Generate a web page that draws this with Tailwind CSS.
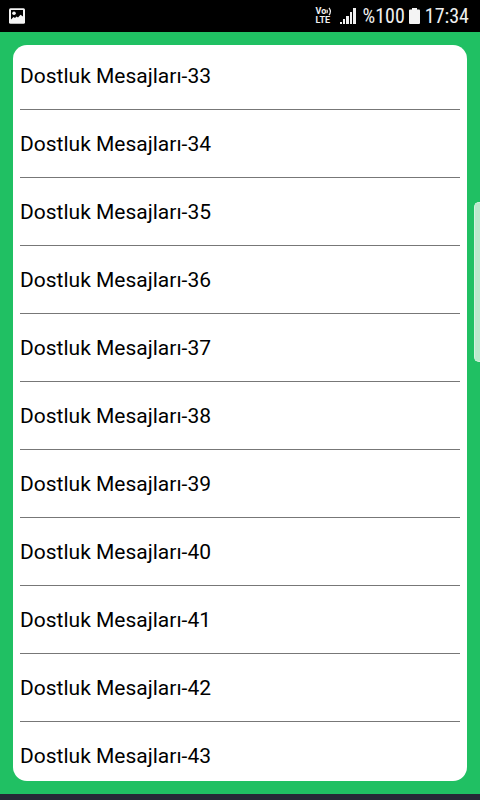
<!DOCTYPE html>
<html lang="tr">
<head>
    <meta charset="UTF-8">
    <meta name="viewport" content="width=device-width, initial-scale=1.0">
    <title>Dostluk Mesajları</title>
    <script src="https://cdn.jsdelivr.net/npm/@tailwindcss/browser@4"></script>
</head>
<body class="flex flex-col h-screen overflow-hidden bg-[#20c063] font-['Roboto',sans-serif]">

    <!-- status bar -->
    <header class="flex shrink-0 items-center justify-between h-8 pl-2 pr-[11px] bg-black text-[#f0f0f0]">
        <svg class="w-[18px] h-4" viewBox="0 0 18 16" role="img" aria-label="Resim">
            <rect x="1" y="0.2" width="16" height="15.6" rx="1.5" fill="#f4f4f4"/>
            <path d="M3 2H15V8.5L12.5 6.8L10 9.5L8.5 8.5L7 10L5.5 9L3 11.5Z" fill="#000"/>
            <circle cx="6" cy="5.2" r="1.8" fill="#f4f4f4"/>
        </svg>
        <div class="flex items-center">
            <div class="flex flex-col w-4 mr-2 text-[9px] leading-[9px] font-bold">
                <span class="flex items-center">Vo
                    <svg class="shrink-0 w-[6px] h-[9px]" viewBox="0 0 6 9" fill="none" stroke="#f0f0f0" stroke-width="1.2">
                        <path d="M0.8 2.8Q1.8 4.5 0.8 6.2M3 0.8Q5.8 4.5 3 8.2"/>
                    </svg>
                </span>
                <span>LTE</span>
            </div>
            <svg class="w-4 h-4 mr-[7px]" viewBox="0 0 16 16" fill="#f0f0f0" role="img" aria-label="Sinyal">
                <rect x="0" y="14" width="2" height="2"/>
                <rect x="3" y="11" width="2" height="5"/>
                <rect x="6" y="8" width="3" height="8"/>
                <rect x="10" y="4" width="2" height="12"/>
                <rect x="13" y="0" width="3" height="16"/>
            </svg>
            <span class="text-[20px] leading-6 font-['Roboto_Condensed','Roboto',sans-serif]">%100</span>
            <svg class="w-[11px] h-4 ml-1 mr-[5px]" viewBox="0 0 11 16" fill="#f4f4f4" role="img" aria-label="Pil">
                <path d="M3 0H8V1.5H10Q11 1.5 11 2.5V15Q11 16 10 16H1Q0 16 0 15V2.5Q0 1.5 1 1.5H3Z"/>
            </svg>
            <span class="text-[20px] leading-6 font-['Roboto_Condensed','Roboto',sans-serif]">17:34</span>
        </div>
    </header>

    <main class="flex flex-1 min-h-0 p-[13px]">
        <ul class="flex-1 overflow-hidden px-[7px] rounded-[14px] bg-white text-[21px] leading-7 text-black">
            <li class="border-b border-[#777]"><a href="#33" class="block pt-[17px] pb-[19px]">Dostluk Mesajları-33</a></li>
            <li class="border-b border-[#777]"><a href="#34" class="block pt-5 pb-[19px]">Dostluk Mesajları-34</a></li>
            <li class="border-b border-[#777]"><a href="#35" class="block pt-5 pb-[19px]">Dostluk Mesajları-35</a></li>
            <li class="border-b border-[#777]"><a href="#36" class="block pt-5 pb-[19px]">Dostluk Mesajları-36</a></li>
            <li class="border-b border-[#777]"><a href="#37" class="block pt-5 pb-[19px]">Dostluk Mesajları-37</a></li>
            <li class="border-b border-[#777]"><a href="#38" class="block pt-5 pb-[19px]">Dostluk Mesajları-38</a></li>
            <li class="border-b border-[#777]"><a href="#39" class="block pt-5 pb-[19px]">Dostluk Mesajları-39</a></li>
            <li class="border-b border-[#777]"><a href="#40" class="block pt-5 pb-[19px]">Dostluk Mesajları-40</a></li>
            <li class="border-b border-[#777]"><a href="#41" class="block pt-5 pb-[19px]">Dostluk Mesajları-41</a></li>
            <li class="border-b border-[#777]"><a href="#42" class="block pt-5 pb-[19px]">Dostluk Mesajları-42</a></li>
            <li><a href="#43" class="block pt-5 pb-[19px]">Dostluk Mesajları-43</a></li>
        </ul>
    </main>

    <footer class="shrink-0 h-[6px] bg-[#252936]"></footer>

    <!-- edge panel handle -->
    <div class="absolute right-0 top-[202px] w-[6px] h-40 rounded-l-[5px] border-l border-y border-[#d5f2df] bg-[#bce9cd]"></div>

</body>
</html>
